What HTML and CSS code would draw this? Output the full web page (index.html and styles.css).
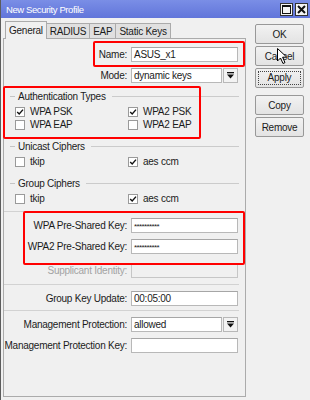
FILE: index.html
```html
<!DOCTYPE html>
<html lang="en">
<head>
    <meta charset="UTF-8">
    <title>New Security Profile</title>
    <link rel="stylesheet" href="styles.css">
</head>
<body>

    <div class="window">
        <!-- Title bar -->
        <div class="titlebar">
            <span class="title">New Security Profile</span>
            <div class="win-btns">
                <span class="wbtn">
                    <svg width="9" height="9" viewBox="0 0 9 9"><rect x="0.5" y="0.5" width="8" height="8" fill="none" stroke="#111" stroke-width="1"/><line x1="0" y1="1.5" x2="9" y2="1.5" stroke="#111" stroke-width="1"/></svg>
                </span>
                <span class="wbtn">
                    <svg width="9" height="9" viewBox="0 0 9 9"><path d="M1 1 L8 8 M8 1 L1 8" stroke="#111" stroke-width="2"/></svg>
                </span>
            </div>
        </div>

        <div class="client">
            <div class="main">
                <div class="tabs">
                    <span class="tab active">General</span>
                    <span class="tab">RADIUS</span>
                    <span class="tab">EAP</span>
                    <span class="tab">Static Keys</span>
                </div>

                <div class="panel">
                    <div class="row">
                        <span class="lbl">Name:</span>
                        <span class="inp">ASUS_x1</span>
                    </div>
                    <div class="row">
                        <span class="lbl">Mode:</span>
                        <span class="inp short">dynamic keys</span>
                        <span class="drop"><svg width="7" height="7" viewBox="0 0 7 7"><rect x="0" y="0" width="7" height="1.3" fill="#111"/><path d="M0 2.5 L7 2.5 L3.5 6.5 Z" fill="#111"/></svg></span>
                    </div>

                    <!-- Authentication types -->
                    <div class="group">
                        <div class="legend"><span class="dash"></span><span>Authentication Types</span><span class="line"></span></div>
                        <div class="checks">
                            <label class="cb"><span class="box on"></span>WPA PSK</label>
                            <label class="cb"><span class="box on"></span>WPA2 PSK</label>
                            <label class="cb"><span class="box"></span>WPA EAP</label>
                            <label class="cb"><span class="box"></span>WPA2 EAP</label>
                        </div>
                    </div>

                    <div class="group">
                        <div class="legend"><span class="dash"></span><span>Unicast Ciphers</span><span class="line"></span></div>
                        <div class="checks">
                            <label class="cb"><span class="box"></span>tkip</label>
                            <label class="cb"><span class="box on"></span>aes ccm</label>
                        </div>
                    </div>

                    <div class="group last">
                        <div class="legend"><span class="dash"></span><span>Group Ciphers</span><span class="line"></span></div>
                        <div class="checks">
                            <label class="cb"><span class="box"></span>tkip</label>
                            <label class="cb"><span class="box on"></span>aes ccm</label>
                        </div>
                    </div>

                    <div class="sep"></div>

                    <div class="row">
                        <span class="lbl">WPA Pre-Shared Key:</span>
                        <span class="inp pw">**********</span>
                    </div>
                    <div class="row">
                        <span class="lbl">WPA2 Pre-Shared Key:</span>
                        <span class="inp pw">**********</span>
                    </div>
                    <div class="row spaced disabled">
                        <span class="lbl">Supplicant Identity:</span>
                        <span class="inp"></span>
                    </div>

                    <div class="sep"></div>

                    <div class="row tight">
                        <span class="lbl">Group Key Update:</span>
                        <span class="inp">00:05:00</span>
                    </div>

                    <div class="sep"></div>

                    <div class="row">
                        <span class="lbl">Management Protection:</span>
                        <span class="inp short">allowed</span>
                        <span class="drop"><svg width="7" height="7" viewBox="0 0 7 7"><rect x="0" y="0" width="7" height="1.3" fill="#111"/><path d="M0 2.5 L7 2.5 L3.5 6.5 Z" fill="#111"/></svg></span>
                    </div>
                    <div class="row">
                        <span class="lbl">Management Protection Key:</span>
                        <span class="inp"></span>
                    </div>
                </div>
            </div>

            <div class="side">
                <button class="btn">OK</button>
                <button class="btn">Cancel</button>
                <button class="btn focus"><span>Apply</span></button>
                <button class="btn gap">Copy</button>
                <button class="btn">Remove</button>
            </div>
        </div>

        <!-- red annotation boxes -->
        <div class="mark mark-name"></div>
        <div class="mark mark-auth"></div>
        <div class="mark mark-keys"></div>

        <!-- mouse pointer -->
        <svg class="cursor" width="12" height="17" viewBox="0 0 12 17"><path d="M0.5 0.5 L0.5 13 L3.5 10 L6 15.5 L8 14.6 L5.6 9.2 L9.8 9.2 Z" fill="#fff" stroke="#000" stroke-width="1"/></svg>
    </div>

</body>
</html>
```

FILE: styles.css
```css
* {
    box-sizing: border-box;
}

body {
    margin: 0;
    background-color: #f0f0f0;
    font-family: 'Liberation Sans', Arial, sans-serif;
    font-size: 10px;
    letter-spacing: -0.25px;
    color: #1b1b1b;
}

.window {
    position: relative;
    width: 310px;
    height: 400px;
    border-left: 1px solid #5c5c5c;
}

/* Title bar */
.titlebar {
    height: 18px;
    background: linear-gradient(#7a8ee6, #6175da);
    display: flex;
    align-items: center;
    justify-content: space-between;
    padding: 0 2px 0 5px;
    color: #fff;
}
.title {
    font-size: 9.5px;
    letter-spacing: -0.4px;
}
.win-btns {
    display: flex;
    gap: 2px;
}
.wbtn {
    width: 13px;
    height: 13px;
    background-color: #f4f4f4;
    border: 1px solid #333;
    display: flex;
    align-items: center;
    justify-content: center;
}

.client {
    display: flex;
}

.main {
    width: 243px;
    margin-left: 2px;
}

/* Tabs */
.tabs {
    display: flex;
    align-items: flex-end;
    height: 17px;
    margin-top: 3px;
    padding-left: 2px;
}
.tab {
    height: 15px;
    padding: 0 3px;
    display: flex;
    align-items: center;
    background-color: #e0e0e0;
    border: 1px solid #ababab;
    border-bottom: none;
    margin-right: -1px;
}
.tab.active {
    height: 18px;
    margin-bottom: -1px;
    background-color: #f0f0f0;
    position: relative;
    z-index: 1;
}

.panel {
    height: 359px;
    border: 1px solid #ababab;
    padding-top: 8px;
}

/* Form rows */
.row {
    display: flex;
    align-items: center;
    height: 15px;
    margin-bottom: 6px;
}
.row.spaced {
    margin-top: 9px;
}
.row.tight {
    margin-bottom: 4px;
}
.lbl {
    width: 124px;
    padding-right: 1px;
    text-align: right;
    margin-right: 3px;
    white-space: nowrap;
}
.inp {
    width: 107px;
    height: 15px;
    line-height: 13px;
    padding-left: 2px;
    background-color: #fff;
    border: 1px solid #b8b8b8;
    border-top-color: #a6a6a6;
    white-space: nowrap;
}
.inp.short {
    width: 91px;
}
.inp.pw {
    font-size: 8px;
    letter-spacing: -0.6px;
    line-height: 15px;
}
.drop {
    width: 15px;
    height: 15px;
    margin-left: 1px;
    background-color: #f3f3f3;
    border: 1px solid #b8b8b8;
    display: flex;
    align-items: center;
    justify-content: center;
}
.disabled .lbl {
    color: #a3a3a3;
}
.disabled .inp {
    background-color: #f0f0f0;
    border-color: #c6c6c6;
}

/* Groups */
.group {
    margin-bottom: 8px;
}
.group.last {
    margin-bottom: 6px;
}
.legend {
    display: flex;
    align-items: center;
    height: 14px;
    padding-left: 6px;
    padding-right: 6px;
}
.dash {
    width: 5px;
    border-top: 1px solid #c4c4c4;
    margin-right: 3px;
}
.line {
    flex: 1;
    border-top: 1px solid #cbcbcb;
    margin-left: 6px;
}
.checks {
    display: grid;
    grid-template-columns: 113px 1fr;
    padding-left: 11px;
    margin-top: 2px;
}
.cb {
    display: flex;
    align-items: center;
    height: 13px;
}
.box {
    width: 10px;
    height: 10px;
    margin-right: 5px;
    background-color: #fff;
    border: 1px solid #9a9a9a;
}
.box.on {
    background: #fff url("data:image/svg+xml,%3Csvg xmlns='http://www.w3.org/2000/svg' width='8' height='8' viewBox='0 0 8 8'%3E%3Cpath d='M1.2 4 L3.2 6 L7 1.6' fill='none' stroke='%23111' stroke-width='1.4'/%3E%3C/svg%3E") center no-repeat;
}

.sep {
    border-top: 1px solid #d2d2d2;
    margin: 3px 6px 6px 0;
}

/* Side buttons */
.side {
    display: flex;
    flex-direction: column;
    gap: 2px;
    padding-top: 6px;
    margin-left: 9px;
}
.btn {
    width: 49px;
    height: 20px;
    padding: 0;
    font-family: inherit;
    font-size: 10px;
    letter-spacing: -0.25px;
    color: #1b1b1b;
    background: linear-gradient(#f2f2f2, #e3e3e3);
    border: 1px solid #989898;
    border-radius: 2px;
}
.btn.focus span {
    display: block;
    margin: 2px;
    line-height: 12px;
    border: 1px dotted #444;
}
.btn.gap {
    margin-top: 5px;
}

/* Annotations over the screenshot */
.mark {
    position: absolute;
    border: 2px solid #ff0000;
    border-radius: 2px;
}
.mark-name {
    left: 92px;
    top: 41px;
    width: 152px;
    height: 26px;
}
.mark-auth {
    left: 2px;
    top: 86px;
    width: 198px;
    height: 53px;
}
.mark-keys {
    left: 22px;
    top: 211px;
    width: 222px;
    height: 54px;
}

.cursor {
    position: absolute;
    left: 276px;
    top: 48px;
}
```
